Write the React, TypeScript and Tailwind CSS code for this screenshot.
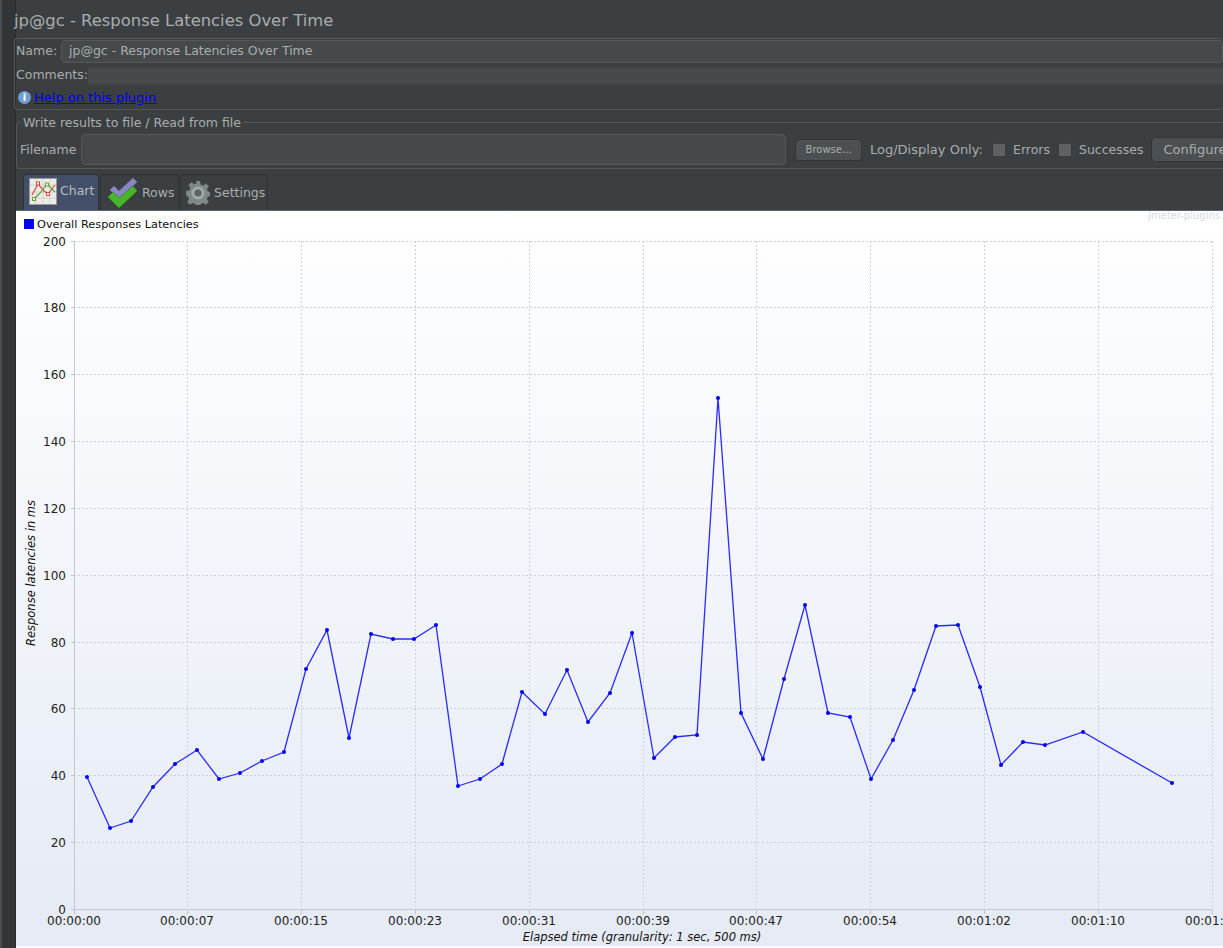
import React from "react";

const font = "font-['DejaVu_Sans',sans-serif]";

const points: [number, number][] = [
  [87, 777], [110, 828], [131, 821], [153, 787], [175, 764], [197, 750], [219, 779], [240, 773],
  [262, 761], [284, 752], [306, 669], [327, 630], [349, 738], [371, 634], [393, 639], [414, 639],
  [436, 625], [458, 786], [480, 779], [502, 764], [522, 692], [545, 714], [567, 670], [588, 722],
  [610, 693], [632, 633], [654, 758], [675, 737], [697, 735], [718, 398], [741, 713], [763, 759],
  [784, 679], [805, 605], [828, 713], [850, 717], [871, 779], [893, 740], [914, 690], [936, 626],
  [958, 625], [980, 687], [1001, 765], [1023, 742], [1045, 745], [1083, 732], [1172, 783],
];

const yTicks = [0, 20, 40, 60, 80, 100, 120, 140, 160, 180, 200];
const xTicks = [
  "00:00:00", "00:00:07", "00:00:15", "00:00:23", "00:00:31", "00:00:39",
  "00:00:47", "00:00:54", "00:01:02", "00:01:10", "00:01:18",
];

const yPos = (v: number) => Math.round(909 - v * 3.342) + 0.5;
const xPos = (i: number) => Math.round(73.5 + i * 113.8) + 0.5;

const ChartIcon = () => (
  <svg width="28" height="27" viewBox="0 0 28 27" className="shrink-0">
    <rect x="0.5" y="0.5" width="27" height="26" fill="#ecebe6" stroke="#9a9a98" />
    <path d="M7 1v25M14 1v25M21 1v25M1 7h26M1 14h26M1 20h26" stroke="#d2d2ce" strokeWidth="1" />
    <path d="M3 17L9 6L15 13L19 16L26 7" fill="none" stroke="#d84a3e" strokeWidth="1.2" />
    <path d="M5 21L12 14L18 6L26 14" fill="none" stroke="#5fa53c" strokeWidth="1.2" />
    <rect x="7.5" y="4" width="3" height="3" fill="#fff" stroke="#d84a3e" />
    <rect x="17.5" y="14.5" width="3" height="3" fill="#fff" stroke="#d84a3e" />
    <rect x="3.5" y="19.5" width="3" height="3" fill="#fff" stroke="#5fa53c" />
    <rect x="16.5" y="5" width="3" height="3" fill="#fff" stroke="#5fa53c" />
  </svg>
);

const RowsIcon = () => (
  <svg width="32" height="32" viewBox="0 0 32 32" className="shrink-0">
    <path d="M3 13L7 9L12 14L26 1L30 5L12 22Z" fill="#8a86c4" stroke="#6d6aa0" strokeWidth="0.8" />
    <path d="M1 20L6 15L12 21L26 9L30 14L12 31Z" fill="#49b52c" stroke="#2f8a1b" strokeWidth="0.8" />
  </svg>
);

const GearIcon = () => (
  <svg width="24" height="24" viewBox="0 0 24 24" className="shrink-0">
    <path
      d="M10 0h4l.7 3.4 2.4 1 2.9-1.9 2.8 2.8-1.9 2.9 1 2.4 3.1.4v4l-3.1.7-1 2.4 1.9 2.9-2.8 2.8-2.9-1.9-2.4 1-.7 3.1h-4l-.7-3.1-2.4-1-2.9 1.9-2.8-2.8 1.9-2.9-1-2.4L0 14v-4l3.4-.6 1-2.4-1.9-2.9 2.8-2.8 2.9 1.9 2.4-1z"
      fill="#7f8886"
    />
    <circle cx="12" cy="12" r="6.5" fill="#a2aaa7" />
    <circle cx="12" cy="12" r="3.6" fill="#5c6462" />
  </svg>
);

const Tab = ({
  label,
  icon,
  active,
  className,
}: {
  label: string;
  icon: React.ReactNode;
  active?: boolean;
  className: string;
}) => (
  <div
    className={`flex h-[36px] items-center rounded-t border border-b-0 border-[#2f3234] ${
      active ? "bg-[#445069] pb-[3px] text-[#b9bdc0]" : "bg-[#3c3f41] pt-[1px] text-[#a9adae]"
    } ${className}`}
  >
    {icon}
    <span className="text-[12.5px]">{label}</span>
  </div>
);

const Checkbox = ({ label }: { label: string }) => (
  <div className="flex items-center gap-[7px]">
    <div className="h-[14px] w-[14px] rounded-[2px] border border-[#3a3c3e] bg-[#5f6163]" />
    <span>{label}</span>
  </div>
);

export default function App() {
  return (
    <div className={`flex h-[948px] w-[1223px] overflow-hidden bg-[#3c3f41] ${font}`}>
      <div className="w-[16px] shrink-0 border-l-[2px] border-r border-l-[#4a4d4f] border-r-[#2b2d2f] bg-[#333638]" />
      <div className="flex min-w-0 flex-1 flex-col bg-[#3c3f41]">
        <div className="-ml-[2px] flex h-[38px] shrink-0 items-center pt-[4px] text-[16.4px] text-[#a9adae]">
          jp@gc - Response Latencies Over Time
        </div>

        <div className="-ml-[2px] h-[72px] shrink-0 rounded-sm border-t border-b border-l border-[#55585a] pl-[1px] text-[12.5px] text-[#a9adae]">
          <div className="flex h-[24px] items-center">
            <span className="w-[45px] shrink-0">Name:</span>
            <div className="flex h-[23px] flex-1 items-center rounded-sm border border-[#55585a] bg-[#45494a] pl-[7px]">
              jp@gc - Response Latencies Over Time
            </div>
          </div>
          <div className="mt-[1px] flex h-[23px] items-center">
            <span className="w-[72px] shrink-0">Comments:</span>
            <div className="h-[16px] flex-1 bg-[#45494a]" />
          </div>
          <div className="flex h-[21px] items-center gap-[3px] pl-[2px]">
            <div className="flex h-[13px] w-[13px] items-center justify-center rounded-full bg-[#6d9fd4] text-[10px] leading-none font-bold text-white">
              i
            </div>
            <a href="#" className="text-[13px] text-[#0000ee] underline">
              Help on this plugin
            </a>
          </div>
        </div>

        <fieldset className="mt-[6px] h-[53px] shrink-0 rounded-sm border-t border-b border-l border-[#55585a] pl-[3px] text-[12.5px] text-[#a9adae]">
          <legend className="ml-[1px] px-[2px] leading-[13px]">Write results to file / Read from file</legend>
          <div className="mt-[5px] flex h-[31px] items-center">
            <span className="w-[61px] shrink-0 pt-[1px]">Filename</span>
            <div className="h-[31px] w-[705px] shrink-0 rounded-sm border border-[#55585a] bg-[#45494a]" />
            <div className="ml-[9px] flex h-[22px] w-[67px] shrink-0 items-center justify-center rounded-sm border border-[#333638] bg-[#4c5052] text-[10px]">
              Browse...
            </div>
            <span className="ml-[8px] w-[115px] shrink-0 text-[13px] whitespace-nowrap">Log/Display Only:</span>
            <div className="ml-[7px] flex shrink-0 gap-[8px] pt-[1px]">
              <Checkbox label="Errors" />
              <Checkbox label="Successes" />
            </div>
            <div className="ml-[7px] flex h-[25px] w-[90px] shrink-0 items-center rounded-sm border border-[#333638] bg-[#4c5052] pl-[12px] text-[13px]">
              Configure
            </div>
          </div>
        </fieldset>

        <div className="mt-[5px] flex h-[36px] shrink-0 items-end gap-[1px] pl-[7px]">
          <Tab active label="Chart" icon={<ChartIcon />} className="w-[76px] gap-[3px] pl-[5px]" />
          <Tab label="Rows" icon={<RowsIcon />} className="w-[79px] gap-[3px] pl-[6px]" />
          <Tab label="Settings" icon={<GearIcon />} className="w-[88px] gap-[4px] pl-[5px]" />
        </div>

        <div className="flex-1 border-t border-[#5a6478] bg-white">
          <div className="h-[735px] bg-gradient-to-b from-white to-[#e5eaf5]">
            <svg viewBox="16 211 1207 735" width="1207" height="735" className="block">
              <rect x="24" y="219" width="10" height="10" fill="#0000ff" />
              <text x="37" y="228" fontSize="11.3" fill="#111">
                Overall Responses Latencies
              </text>
              <text x="1148" y="219" fontSize="10" fill="#d8dbe0">
                jmeter-plugins.org
              </text>

              {yTicks.map((v) => (
                <g key={v}>
                  {v > 0 && (
                    <line x1="74" x2="1212" y1={yPos(v)} y2={yPos(v)} stroke="#ccd0da" strokeDasharray="2 2" />
                  )}
                  <line x1="71" x2="74" y1={yPos(v)} y2={yPos(v)} stroke="#c0c4cc" />
                  <text x="66" y={yPos(v) + 4} fontSize="12" fill="#222" textAnchor="end">
                    {v}
                  </text>
                </g>
              ))}

              {xTicks.map((t, i) => (
                <g key={t}>
                  {i > 0 && (
                    <line x1={xPos(i)} x2={xPos(i)} y1="241" y2="910" stroke="#ccd0da" strokeDasharray="2 2" />
                  )}
                  <line x1={xPos(i)} x2={xPos(i)} y1="910" y2="914" stroke="#c0c4cc" />
                  <text x={xPos(i) - 0.5} y="925" fontSize="12" fill="#222" textAnchor="middle">
                    {t}
                  </text>
                </g>
              ))}

              <line x1="74.5" x2="74.5" y1="241" y2="910" stroke="#c3c7d0" />
              <line x1="74" x2="1212" y1="909.5" y2="909.5" stroke="#c3c7d0" />

              <text x="642" y="941" fontSize="11.5" fontStyle="italic" fill="#111" textAnchor="middle">
                Elapsed time (granularity: 1 sec, 500 ms)
              </text>
              <text
                fontSize="11.5"
                fontStyle="italic"
                fill="#111"
                textAnchor="middle"
                transform="translate(35 573) rotate(-90)"
              >
                Response latencies in ms
              </text>

              <polyline
                points={points.map(([x, y]) => `${x},${y}`).join(" ")}
                fill="none"
                stroke="#2a2aff"
                strokeWidth="1.3"
              />
              {points.map(([x, y]) => (
                <circle key={x} cx={x} cy={y} r="2" fill="#0000ee" />
              ))}
            </svg>
          </div>
        </div>
      </div>
    </div>
  );
}
